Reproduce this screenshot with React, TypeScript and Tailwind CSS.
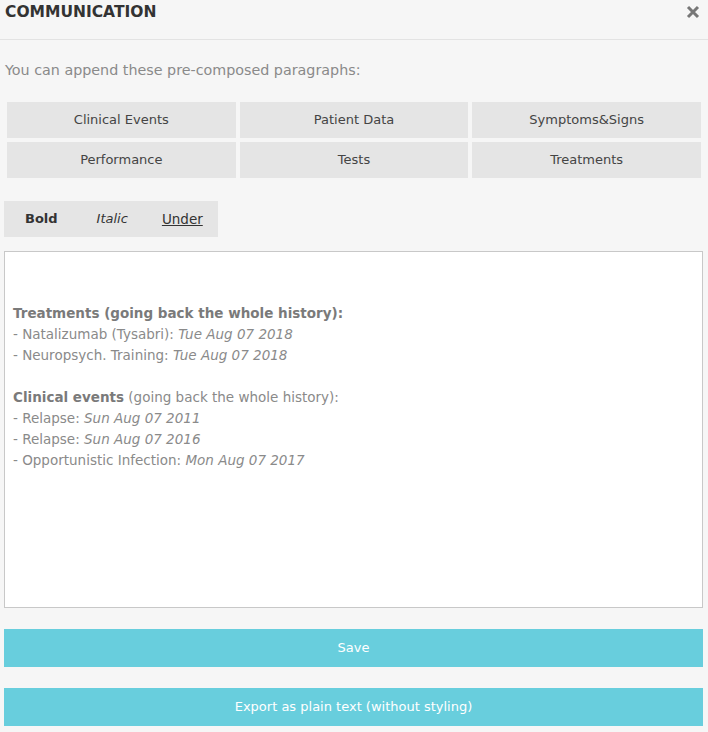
import React from "react";

const font = { fontFamily: '"DejaVu Sans", "Open Sans", sans-serif' };

export default function App() {
  const presets = ["Clinical Events", "Patient Data", "Symptoms&Signs", "Performance", "Tests", "Treatments"];
  return (
    <div className="w-[708px] h-[732px] bg-[#f6f6f6] overflow-hidden" style={font}>
      <div className="flex items-center justify-between h-[40px] pl-[5px] pr-[8px] border-b border-[#e3e3e3]">
        <div className="text-[15.5px] font-bold text-[#333] -mt-[13px]">COMMUNICATION</div>
        <svg width="14" height="14" viewBox="0 0 14 14" className="-mt-[15px]">
          <path d="M2 2 L12 12 M12 2 L2 12" stroke="#777" strokeWidth="3" strokeLinecap="butt" />
        </svg>
      </div>
      <div className="pl-[5px] pt-[20px] text-[14.3px] text-[#8a8a8a] leading-[20px]">You can append these pre-composed paragraphs:</div>
      <div className="grid grid-cols-3 gap-[4px] px-[7px] mt-[22px] w-[708px]">
        {presets.map((p) => (
          <div key={p} className="h-[36px] bg-[#e5e5e5] flex items-center justify-center text-[13px] text-[#444]">{p}</div>
        ))}
      </div>
      <div className="ml-[4px] mt-[23px] w-[214px] h-[36px] bg-[#e5e5e5] flex items-center text-[13px] text-[#333]">
        <span className="font-bold ml-[21px]">Bold</span>
        <span className="italic ml-[39px]">Italic</span>
        <span className="underline ml-[34px] text-[13.5px]">Under</span>
      </div>
      <div className="ml-[4px] mt-[14px] w-[699px] h-[357px] bg-white border border-[#c8c8c8] pt-[51px] pl-[8px] text-[13.5px] leading-[21px] text-[#8a8a8a]">
        <div className="font-bold text-[#7a7a7a]">Treatments (going back the whole history):</div>
        <div>- Natalizumab (Tysabri): <i>Tue Aug 07 2018</i></div>
        <div>- Neuropsych. Training: <i>Tue Aug 07 2018</i></div>
        <div>&nbsp;</div>
        <div><b className="text-[#7a7a7a]">Clinical events</b> (going back the whole history):</div>
        <div>- Relapse: <i>Sun Aug 07 2011</i></div>
        <div>- Relapse: <i>Sun Aug 07 2016</i></div>
        <div>- Opportunistic Infection: <i>Mon Aug 07 2017</i></div>
      </div>
      <div className="ml-[4px] mt-[21px] w-[699px] h-[38px] bg-[#68cedd] flex items-center justify-center text-white text-[13px]">Save</div>
      <div className="ml-[4px] mt-[21px] w-[699px] h-[38px] bg-[#68cedd] flex items-center justify-center text-white text-[13px]">Export as plain text (without styling)</div>
    </div>
  );
}
